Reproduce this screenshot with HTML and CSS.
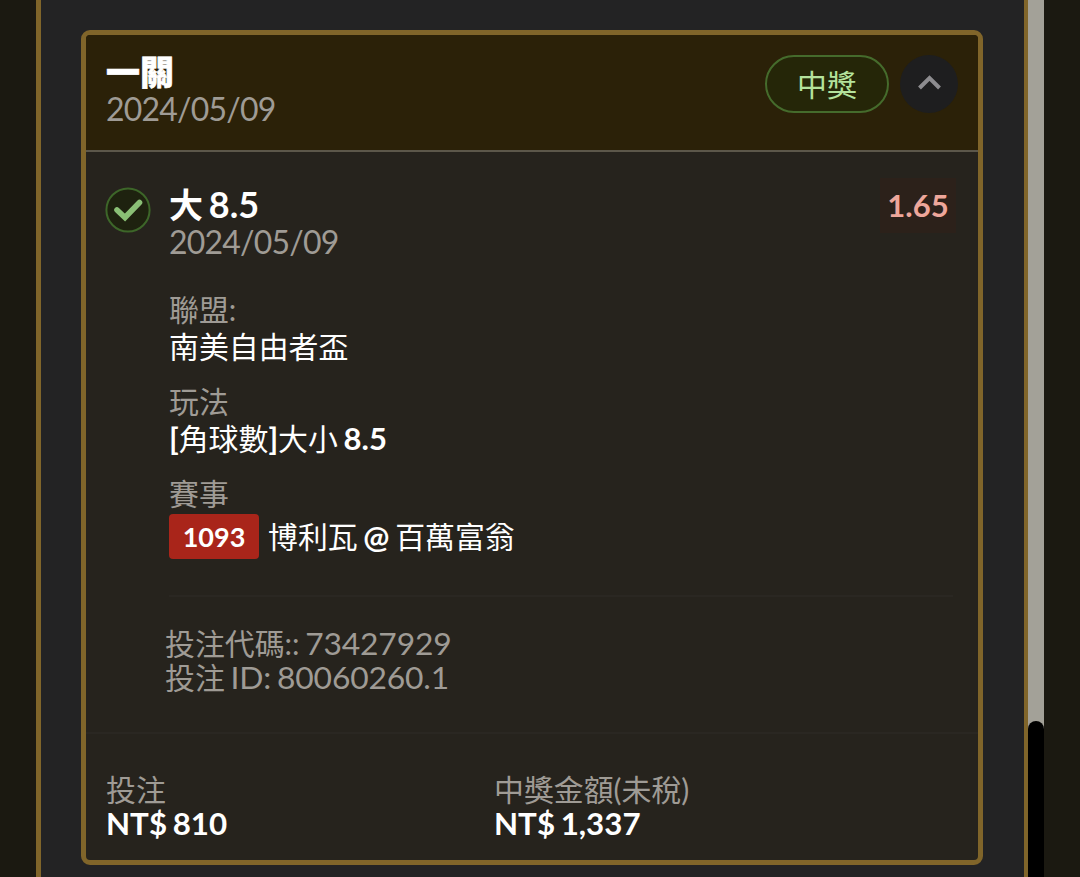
FILE: index.html
```html
<!DOCTYPE html>
<html lang="zh-Hant">
<head>
    <meta charset="UTF-8">
    <meta name="viewport" content="width=device-width, initial-scale=1.0">
    <title>投注紀錄</title>
    <link rel="stylesheet" href="styles.css">
</head>
<body>
    <div class="panel">
        <div class="bet-card">
            <div class="bet-header">
                <div class="bet-title">
                    <h2>一關</h2>
                    <div class="date">2024/05/09</div>
                </div>
                <div class="status-pill">中獎</div>
                <button class="toggle" type="button" aria-label="收合">
                    <svg width="24" height="16" viewBox="0 0 24 16">
                        <path d="M2.5 13 L12.5 3 L22.5 13" fill="none" stroke="#8d8c8f" stroke-width="4"/>
                    </svg>
                </button>
            </div>

            <div class="bet-body">
                <svg class="check" width="46" height="46" viewBox="0 0 46 46">
                    <circle cx="23" cy="23" r="21.6" fill="#1e220f" stroke="#3d6629" stroke-width="2"/>
                    <path d="M12 23 L20 30.5 L34.5 15.5" fill="none" stroke="#8abf75" stroke-width="5.6" stroke-linecap="round"/>
                </svg>
                <div class="bet-detail">
                    <div class="selection">
                        <div>
                            <h3>大 <span>8.5</span></h3>
                            <div class="date">2024/05/09</div>
                        </div>
                        <div class="odds">1.65</div>
                    </div>
                    <div class="field">
                        <div class="muted">聯盟:</div>
                        <div>南美自由者盃</div>
                    </div>
                    <div class="field">
                        <div class="muted">玩法</div>
                        <div><b>[</b>角球數<b>]</b>大小 <b>8.5</b></div>
                    </div>
                    <div class="field">
                        <div class="muted">賽事</div>
                        <div class="match">
                            <span class="match-no">1093</span>
                            <span>博利瓦 <b>@</b> 百萬富翁</span>
                        </div>
                    </div>
                    <div class="codes">
                        <div>投注代碼:: <span class="num">73427929</span></div>
                        <div>投注 <span class="num">ID: 80060260.1</span></div>
                    </div>
                </div>
            </div>

            <div class="bet-footer">
                <div>
                    <div class="muted">投注</div>
                    <div class="amount">NT$ 810</div>
                </div>
                <div>
                    <div class="muted">中獎金額(未稅)</div>
                    <div class="amount">NT$ 1,337</div>
                </div>
            </div>
        </div>
    </div>
    <div class="scrollbar">
        <div class="thumb"></div>
    </div>
</body>
</html>
```
FILE: styles.css
```css
* {
    box-sizing: border-box;
}

body {
    margin: 0;
    padding: 0 36px;
    height: 877px;
    overflow: hidden;
    display: flex;
    background: #1b1911;
    color: #fff;
    font-family: Lato, "Noto Sans CJK TC", sans-serif;
    font-size: 29.9px;
    line-height: 37px;
    word-spacing: -2px;
    white-space: nowrap;
}

h2, h3 {
    margin: 0;
    font-size: 34px;
    font-weight: 900;
}

h2 {
    -webkit-text-stroke: 0.6px #fff;
}

h3 {
    font-weight: 700;
    word-spacing: -2.5px;
}

h3 span {
    font-size: 36px;
    line-height: 1;
}

b {
    font-size: 31px;
    line-height: 1;
}

.muted {
    color: #9f9b95;
}

.date {
    color: #9f9b95;
    font-size: 32px;
    letter-spacing: -0.8px;
    line-height: 38px;
}

.num {
    font-size: 31.8px;
    letter-spacing: -0.15px;
    line-height: 1;
}

.panel {
    flex: 1;
    padding: 30px 41px 12px 40px;
    background: #232324;
    border: solid #80652a;
    border-width: 0 4px 0 5px;
}

.bet-card {
    height: 835px;
    display: flex;
    flex-direction: column;
    background: #26231d;
    border: 5px solid #80652a;
    border-radius: 9px;
    overflow: hidden;
}

.bet-header {
    display: flex;
    align-items: flex-start;
    height: 117px;
    padding: 20px 20px 0;
    background: #2b2108;
    border-bottom: 2px solid #5c574a;
}

.bet-title {
    flex: 1;
    margin-top: -2px;
}

.status-pill {
    width: 124px;
    height: 58px;
    border: 2px solid #456b2c;
    border-radius: 29px;
    background: #252608;
    color: #b4e29c;
    line-height: 55px;
    text-align: center;
}

.toggle {
    width: 58px;
    height: 58px;
    margin-left: 11px;
    padding: 0 0 3px;
    display: flex;
    align-items: center;
    justify-content: center;
    border: 0;
    border-radius: 50%;
    background: #1e1e1f;
}

.bet-body {
    flex: 1;
    display: flex;
    gap: 18px;
    padding: 35px 25px 0 19px;
}

.bet-detail {
    flex: 1;
    margin-top: -1px;
}

.selection {
    display: flex;
    justify-content: space-between;
    margin-bottom: 30px;
}

.odds {
    width: 76px;
    height: 55px;
    margin: -8px -3px 0 0;
    background: #2c211a;
    color: #eea79b;
    font-size: 31px;
    font-weight: 700;
    line-height: 54px;
    text-align: center;
}

.field {
    margin-bottom: 18px;
}

.match {
    display: flex;
    align-items: center;
    gap: 9px;
    margin-top: 2px;
}

.match-no {
    width: 90px;
    height: 45px;
    border-radius: 4px;
    background: #a9251a;
    font-size: 27px;
    font-weight: 700;
    line-height: 46px;
    text-align: center;
}

.codes {
    margin-top: 36px;
    padding-top: 29px;
    border-top: 2px solid #2a2722;
    color: #9f9b95;
    line-height: 34px;
}

.codes div {
    margin-left: -4px;
}

.bet-footer {
    display: grid;
    grid-template-columns: 388px 1fr;
    height: 128px;
    padding: 38px 20px 0;
    border-top: 2px solid #2a2722;
    line-height: 34px;
}

.amount {
    font-size: 31.3px;
    font-weight: 700;
}

.scrollbar {
    width: 16px;
    padding-top: 721px;
    background: #a3a198;
}

.thumb {
    height: 170px;
    border-radius: 8px 8px 0 0;
    background: #000;
}
```
